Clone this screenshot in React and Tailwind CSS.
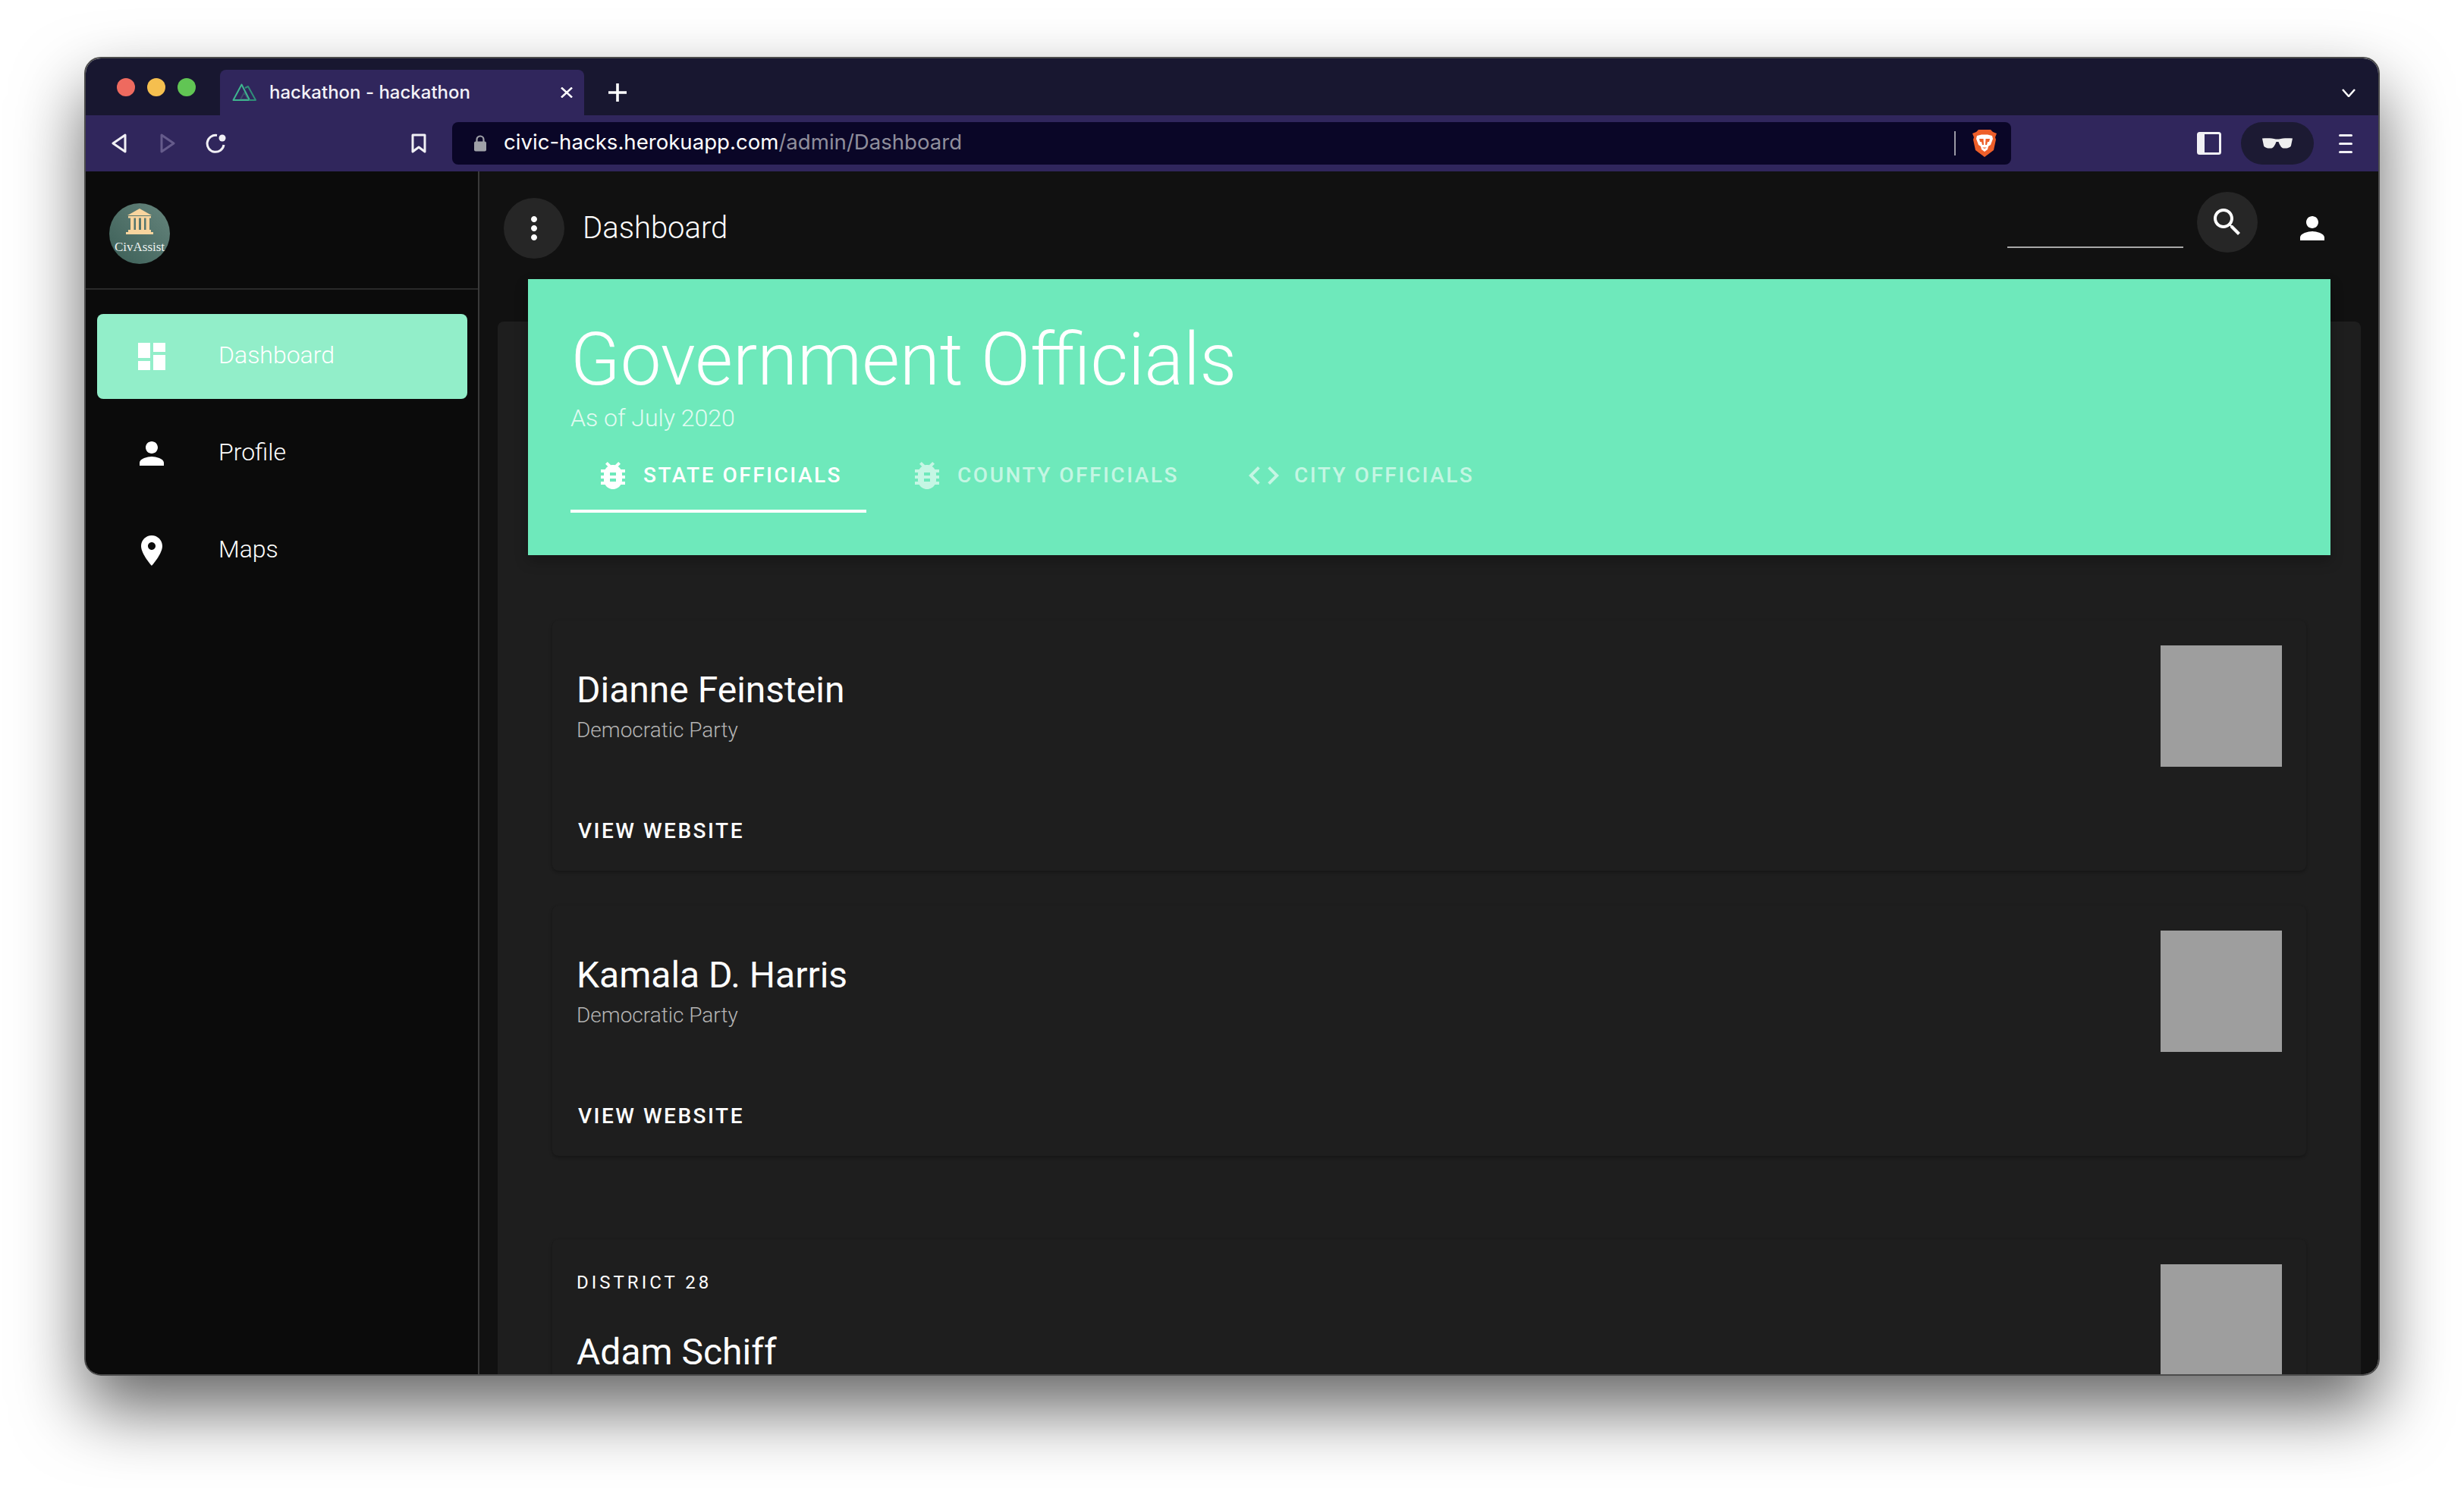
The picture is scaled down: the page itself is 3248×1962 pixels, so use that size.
import React from 'react';

const ICONS = {
  dashboard: 'M3 13h8V3H3v10zm0 8h8v-6H3v6zm10 0h8V11h-8v10zm0-18v6h8V3h-8z',
  person: 'M12 12c2.21 0 4-1.79 4-4s-1.79-4-4-4-4 1.79-4 4 1.79 4 4 4zm0 2c-2.67 0-8 1.34-8 4v2h16v-2c0-2.66-5.33-4-8-4z',
  place: 'M12 2C8.13 2 5 5.13 5 9c0 5.25 7 13 7 13s7-7.75 7-13c0-3.87-3.13-7-7-7zm0 9.5c-1.38 0-2.5-1.12-2.5-2.5s1.12-2.5 2.5-2.5 2.5 1.12 2.5 2.5-1.12 2.5-2.5 2.5z',
  more: 'M12 8c1.1 0 2-.9 2-2s-.9-2-2-2-2 .9-2 2 .9 2 2 2zm0 2c-1.1 0-2 .9-2 2s.9 2 2 2 2-.9 2-2-.9-2-2-2zm0 6c-1.1 0-2 .9-2 2s.9 2 2 2 2-.9 2-2-.9-2-2-2z',
  search: 'M15.5 14h-.79l-.28-.27C15.41 12.59 16 11.11 16 9.5 16 5.91 13.09 3 9.5 3S3 5.91 3 9.5 5.91 16 9.5 16c1.61 0 3.09-.59 4.23-1.57l.27.28v.79l5 4.99L20.49 19l-4.99-5zm-6 0C7.01 14 5 11.99 5 9.5S7.01 5 9.5 5 14 7.01 14 9.5 11.99 14 9.5 14z',
  bug: 'M14,12H10V10H14M14,16H10V14H14M20,8H17.19C16.74,7.22 16.12,6.55 15.37,6.04L17,4.41L15.59,3L13.42,5.17C12.96,5.06 12.5,5 12,5C11.5,5 11.04,5.06 10.59,5.17L8.41,3L7,4.41L8.62,6.04C7.88,6.55 7.26,7.22 6.81,8H4V10H6.09C6.04,10.33 6,10.66 6,11V12H4V14H6V15C6,15.34 6.04,15.67 6.09,16H4V18H6.81C7.85,19.79 9.78,21 12,21C14.22,21 16.15,19.79 17.19,18H20V16H17.91C17.96,15.67 18,15.34 18,15V14H20V12H18V11C18,10.66 17.96,10.33 17.91,10H20V8Z',
  code: 'M14.6,16.6L19.2,12L14.6,7.4L16,6L22,12L16,18L14.6,16.6M9.4,16.6L4.8,12L9.4,7.4L8,6L2,12L8,18L9.4,16.6Z',
};

function Icon({ name, className = 'w-12 h-12' }) {
  return (
    <svg viewBox="0 0 24 24" fill="currentColor" className={`shrink-0 ${className}`}>
      <path d={ICONS[name]} />
    </svg>
  );
}

function TabStrip() {
  return (
    <div className="flex h-[75px] shrink-0 bg-[#181730] font-[Inter]">
      <div className="ml-[41px] mt-[26px] flex h-6 gap-4">
        <div className="w-6 h-6 rounded-full bg-[#ee6a5f]" />
        <div className="w-6 h-6 rounded-full bg-[#f5bf4f]" />
        <div className="w-6 h-6 rounded-full bg-[#61c554]" />
      </div>
      <div className="ml-8 mt-[15px] flex h-[60px] w-[480px] items-center rounded-t-[8px] bg-[#30265c] pl-4 text-white">
        <svg viewBox="0 0 32 24" fill="none" strokeWidth="2" strokeLinejoin="round" className="w-8 h-6 shrink-0">
          <path d="M11 21H21L16 12Z" stroke="#3c4b6a" />
          <path d="M1.5 22H23L12.5 1.5Z" stroke="#3fb58f" />
          <path d="M17 6L21 4L31 22H22" stroke="#2f8f78" />
        </svg>
        <span className="ml-[17px] text-[24px] font-medium leading-none whitespace-nowrap text-[#f3f2f7]">hackathon - hackathon</span>
        <svg viewBox="0 0 16 14" className="ml-auto mr-[15px] w-4 h-[14px]" stroke="#ffffff" strokeWidth="2.5">
          <path d="M1 0.5L15 13.5M15 0.5L1 13.5" />
        </svg>
      </div>
      <svg viewBox="0 0 24 24" className="ml-[32px] mt-[33px] w-6 h-6" stroke="#ffffff" strokeWidth="3.6">
        <path d="M12 0V24M0 12H24" />
      </svg>
      <svg viewBox="0 0 18 11" className="ml-auto mr-[30px] mt-[40px] w-[18px] h-[11px]" fill="none" stroke="#ffffff" strokeWidth="2.5">
        <path d="M1 1L9 10L17 1" />
      </svg>
    </div>
  );
}

function Toolbar() {
  return (
    <div className="flex h-[74px] shrink-0 items-center bg-[#30265c] font-[Inter]">
      <svg viewBox="0 0 20 26" className="ml-[34px] w-5 h-[26px]" fill="none" stroke="#f1f0f5" strokeWidth="3" strokeLinejoin="round">
        <path d="M18 2L2 13L18 24Z" />
      </svg>
      <svg viewBox="0 0 20 26" className="ml-[44px] w-5 h-[26px]" fill="none" stroke="#655b8b" strokeWidth="3" strokeLinejoin="round">
        <path d="M2 2L18 13L2 24Z" />
      </svg>
      <svg viewBox="0 0 27 26" className="ml-[40px] w-[27px] h-[26px]" fill="none" stroke="#f1f0f5" strokeWidth="3">
        <path d="M15 2.5A11 11 0 1 0 24 15" />
        <circle cx="22" cy="6" r="4.5" fill="#f1f0f5" stroke="none" />
      </svg>
      <svg viewBox="0 0 20 26" className="ml-[244px] w-5 h-[26px]" fill="none" stroke="#f1f0f5" strokeWidth="3" strokeLinejoin="round">
        <path d="M2 2H18V24L10 18L2 24Z" />
      </svg>
      <div className="ml-[34px] flex h-14 w-[2055px] items-center rounded-[8px] bg-[#0a0627]">
        <svg viewBox="0 0 18 22" className="ml-[28px] w-[18px] h-[22px]" fill="#9fa1a8">
          <path d="M4.5 9V6a4.5 4.5 0 0 1 9 0v3" fill="none" stroke="#9fa1a8" strokeWidth="2.2" />
          <rect x="1" y="8.5" width="16" height="13" rx="2" />
        </svg>
        <span className="ml-[22px] mb-[2px] text-[27.6px] leading-none whitespace-nowrap text-white">
          civic-hacks.herokuapp.com<span className="text-[#8f8e9c]">/admin/Dashboard</span>
        </span>
        <div className="ml-auto h-8 w-[2px] bg-[#9b9aa5]" />
        <svg viewBox="0 0 32 36" className="ml-[22px] mr-[19px] w-8 h-9">
          <path d="M8 0H24L27 3L32 5L30 10L31 13L28 27L16 36L4 27L1 13L2 10L0 5L5 3Z" fill="#ee5f2a" />
          <path d="M6 8L12 6.5H20L26 8L27 12L24 20L21 22L20 26L16 29L12 26L11 22L8 20L5 12Z" fill="#ffffff" />
          <path d="M9 12H14.5L15 20H13L12 16H10ZM23 12H17.5L17 20H19L20 16H22ZM13 23.5H19L16 25Z" fill="#ee5f2a" />
        </svg>
      </div>
      <svg viewBox="0 0 32 30" className="ml-[245px] w-8 h-[30px]">
        <rect x="1.5" y="1.5" width="29" height="27" rx="2" fill="none" stroke="#f1f0f5" strokeWidth="3" />
        <rect x="1" y="1" width="9" height="28" fill="#f1f0f5" />
      </svg>
      <div className="ml-[26px] flex h-14 w-24 items-center justify-center rounded-full bg-[#1c1a33]">
        <svg viewBox="0 0 40 14" className="w-10 h-[14px]" fill="#eeeeee">
          <path d="M0 0.5C6 0 13 0 18 1.5H22C27 0 34 0 40 0.5L38 10C37 13 31 14 28 13.5C25 13 23 9 21.5 5H18.5C17 9 15 13 12 13.5C9 14 3 13 2 10Z" />
        </svg>
      </div>
      <div className="ml-[33px] flex w-[18px] flex-col gap-[8px]">
        <div className="h-[3px] rounded-full bg-[#f1f0f5]" />
        <div className="h-[3px] rounded-full bg-[#f1f0f5]" />
        <div className="h-[3px] rounded-full bg-[#f1f0f5]" />
      </div>
    </div>
  );
}

function Logo() {
  return (
    <div className="flex h-20 w-20 flex-col items-center rounded-full bg-gradient-to-tr from-[#3c5f57] to-[#66857d] pt-[7px]">
      <svg viewBox="0 0 36 34" className="w-9 h-[34px] shrink-0" fill="#f8d49e">
        <path d="M18 0L34 9H2Z" />
        <rect x="3" y="10" width="30" height="2.5" />
        <rect x="6" y="12" width="4.5" height="16" />
        <rect x="13" y="12" width="4" height="16" />
        <rect x="20" y="12" width="4" height="16" />
        <rect x="26.5" y="12" width="4.5" height="16" />
        <rect x="3" y="28" width="30" height="3" />
        <rect x="0" y="31" width="36" height="3" />
      </svg>
      <span className="mt-[8px] font-['Liberation_Serif',serif] text-[17px] leading-none text-[#eef2f0]">CivAssist</span>
    </div>
  );
}

function NavItem({ icon, label, active }) {
  return (
    <div className={`ml-[15px] flex h-[112px] w-[488px] items-center rounded-[8px] pl-12 text-white ${active ? 'bg-[#92eec9]' : ''}`}>
      <Icon name={icon} />
      <span className="ml-[64px] mb-[5px] text-[32px] font-light leading-none">{label}</span>
    </div>
  );
}

function Sidebar() {
  return (
    <aside className="flex w-[519px] shrink-0 flex-col border-r-2 border-[#3a3a3a] bg-[#0b0b0b]">
      <div className="h-[156px] shrink-0 border-b-2 border-[#2a2a2a] pl-[31px] pt-[42px]">
        <Logo />
      </div>
      <nav className="mt-[32px] flex flex-col gap-4">
        <NavItem icon="dashboard" label="Dashboard" active />
        <NavItem icon="person" label="Profile" />
        <NavItem icon="place" label="Maps" />
      </nav>
    </aside>
  );
}

function TopBar() {
  return (
    <div className="flex h-[142px] shrink-0 items-start pl-8 pr-[63px] text-white">
      <div className="mt-[35px] flex h-20 w-20 items-center justify-center rounded-full bg-[#262626]">
        <Icon name="more" />
      </div>
      <span className="ml-6 mt-[53px] text-[40px] font-light leading-[44px] whitespace-nowrap">Dashboard</span>
      <div className="ml-auto mt-[99px] h-[2px] w-[232px] bg-[#a8a8a8]" />
      <div className="ml-[18px] mt-[27px] flex h-20 w-20 items-center justify-center rounded-full bg-[#262626]">
        <Icon name="search" />
      </div>
      <div className="ml-12 mt-[51px]">
        <Icon name="person" />
      </div>
    </div>
  );
}

function Tab({ icon, label, active }) {
  return (
    <div className={`flex h-24 items-center border-b-4 px-8 pt-[2px] text-[28px] font-medium uppercase tracking-[2.5px] whitespace-nowrap ${active ? 'border-white text-white' : 'border-transparent text-white/60'}`}>
      <Icon name={icon} />
      <span className="ml-4">{label}</span>
    </div>
  );
}

function Banner() {
  return (
    <div className="mx-10 -mt-14 flex h-[364px] flex-col bg-[#6ee9bb] pl-14 text-white shadow-[0_8px_16px_rgba(0,0,0,0.25)]">
      <h1 className="mt-[50px] text-[96px] font-light leading-[112px] whitespace-nowrap">Government Officials</h1>
      <p className="mt-[-1px] text-[32px] font-light leading-[44px] text-white/80">As of July 2020</p>
      <div className="mt-[7px] flex gap-6">
        <Tab icon="bug" label="State Officials" active />
        <Tab icon="bug" label="County Officials" />
        <Tab icon="code" label="City Officials" />
      </div>
    </div>
  );
}

function Official({ district, name, party, className = '' }) {
  return (
    <div className={`mx-[72px] flex h-[330px] justify-between rounded-[8px] bg-[#1e1e1e] pl-8 pr-8 pt-[33px] shadow-[0_2px_4px_rgba(0,0,0,0.3)] ${className}`}>
      <div className="flex flex-col items-start text-white">
        {district && (
          <div className="mt-[10px] mb-[46px] text-[24px] leading-7 tracking-[4px]">{district}</div>
        )}
        <div className={`text-[48px] leading-[64px] ${district ? '' : 'mt-[27px]'}`}>{name}</div>
        {party && <div className="mt-[1px] text-[28px] font-light leading-10 text-[#b4b4b4]">{party}</div>}
        {party && <div className="mt-[93px] ml-[2px] text-[28px] font-medium uppercase leading-10 tracking-[2.5px]">View Website</div>}
      </div>
      <div className="h-40 w-40 shrink-0 bg-[#9e9e9e]" />
    </div>
  );
}

export default function App() {
  return (
    <div className="h-[1962px] w-[3248px] overflow-hidden bg-white pl-[111px] pt-[75px] font-[Roboto,sans-serif]">
      <div className="flex h-[1739px] w-[3026px] flex-col overflow-hidden rounded-[22px] border-2 border-[#4c4c4c] shadow-[0_44px_90px_rgba(0,0,0,0.6)]">
        <TabStrip />
        <Toolbar />
        <div className="flex min-h-0 flex-1 bg-[#111111]">
          <Sidebar />
          <main className="flex min-w-0 flex-1 flex-col overflow-hidden">
            <TopBar />
            <div className="ml-6 mr-[23px] mt-14 flex-1 rounded-t-[8px] bg-[#1e1e1e]">
              <Banner />
              <div className="mt-[86px]">
                <Official name="Dianne Feinstein" party="Democratic Party" />
                <Official name="Kamala D. Harris" party="Democratic Party" className="mt-[46px]" />
                <Official district="DISTRICT 28" name="Adam Schiff" className="mt-[110px]" />
              </div>
            </div>
          </main>
        </div>
      </div>
    </div>
  );
}
